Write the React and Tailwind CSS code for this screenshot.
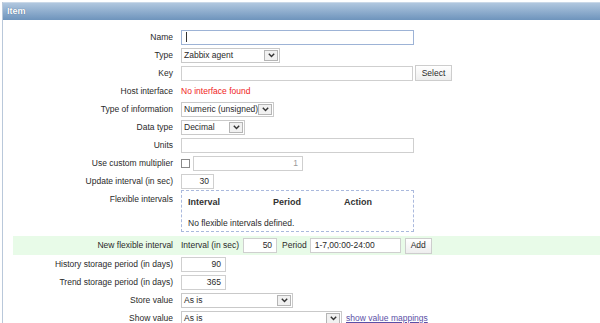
import React from "react";

function Chevron() {
  return (
    <svg width="7" height="5" viewBox="0 0 7 5" className="block">
      <path d="M0.8 0.8 L3.5 3.6 L6.2 0.8" fill="none" stroke="#333" strokeWidth="1.4" />
    </svg>
  );
}

function Select({ w, text }) {
  return (
    <div className={`flex items-center h-[15px] border border-[#c9c9c9] bg-white pl-[2px] pr-[1px] ${w}`}>
      <span className="flex-1 whitespace-nowrap">{text}</span>
      <span className="flex items-center justify-center w-[14px] h-[11px] border border-[#b5b5b5] bg-[#f1f1f1] shrink-0">
        <Chevron />
      </span>
    </div>
  );
}

function Input({ w, value = "", right = false, blue = false, faded = false }) {
  return (
    <div
      className={`h-[15px] border bg-white flex items-center px-[4px] ${w} ${
        blue ? "border-[#9db3d6]" : "border-[#cfcfcf]"
      } ${right ? "justify-end" : ""} ${faded ? "text-[#9a9a9a]" : ""}`}
    >
      {blue ? <span className="w-px h-[10px] bg-[#333]" /> : value}
    </div>
  );
}

function Button({ w, text }) {
  return (
    <div
      className={`h-[16px] border border-[#cdcdcd] bg-gradient-to-b from-white to-[#eeeeee] flex items-center justify-center ${w}`}
    >
      {text}
    </div>
  );
}

function Row({ label, children, h = "h-[18px]", top = false }) {
  return (
    <div className={`flex ${h} ${top ? "items-start" : "items-center"}`}>
      <div className={`w-[160px] text-right whitespace-nowrap ${top ? "pt-[3px]" : ""}`}>{label}</div>
      <div className="ml-[8px] flex items-center">{children}</div>
    </div>
  );
}

export default function App() {
  return (
    <div className="w-[600px] h-[323px] overflow-hidden bg-white font-['Liberation_Sans',Arial,sans-serif] text-[8.5px] text-[#2a2a2a] pl-[2px]">
      <div className="h-full border-l border-[#b9c8da]">
        <div className="mt-[2px] h-[18px] bg-gradient-to-b from-[#b0c7df] to-[#6e94bc] border-t border-[#c9d8e8] flex items-center pl-[4px]">
          <span className="text-white font-bold text-[9px] [text-shadow:0_0_1px_#3d5f85]">Item</span>
        </div>
        <div className="pl-[10px] pt-[8px]">
          <Row label="Name">
            <Input w="w-[233px]" blue />
          </Row>
          <Row label="Type">
            <Select w="w-[99px]" text="Zabbix agent" />
          </Row>
          <Row label="Key">
            <Input w="w-[232px]" />
            <div className="ml-[2px]">
              <Button w="w-[37px]" text="Select" />
            </div>
          </Row>
          <Row label="Host interface">
            <span className="text-[#f01d1d]">No interface found</span>
          </Row>
          <Row label="Type of information">
            <Select w="w-[93px]" text="Numeric (unsigned)" />
          </Row>
          <Row label="Data type">
            <Select w="w-[64px]" text="Decimal" />
          </Row>
          <Row label="Units">
            <Input w="w-[233px]" />
          </Row>
          <Row label="Use custom multiplier">
            <div className="w-[9px] h-[9px] border border-[#8a8a8a] bg-white" />
            <div className="ml-[3px]">
              <Input w="w-[110px]" value="1" right faded />
            </div>
          </Row>
          <Row label="Update interval (in sec)">
            <Input w="w-[33px]" value="30" right />
          </Row>
          <Row label="Flexible intervals" h="h-[46px]" top>
            <div className="w-[233px] h-[42px] border border-dashed border-[#aab9dd] px-[6px] pt-[5px]">
              <div className="flex font-bold text-[9px] text-[#333]">
                <span className="w-[85px]">Interval</span>
                <span className="w-[71px]">Period</span>
                <span>Action</span>
              </div>
              <div className="mt-[7px]">No flexible intervals defined.</div>
            </div>
          </Row>
          <div className="bg-[#e8fbe8]">
            <Row label="New flexible interval" h="h-[19px]">
              <span>Interval (in sec)</span>
              <div className="ml-[4px]">
                <Input w="w-[34px]" value="50" right />
              </div>
              <span className="ml-[5px]">Period</span>
              <div className="ml-[3px]">
                <Input w="w-[91px]" value="1-7,00:00-24:00" />
              </div>
              <div className="ml-[4px]">
                <Button w="w-[27px]" text="Add" />
              </div>
            </Row>
          </div>
          <Row label="History storage period (in days)">
            <Input w="w-[45px]" value="90" right />
          </Row>
          <Row label="Trend storage period (in days)">
            <Input w="w-[45px]" value="365" right />
          </Row>
          <Row label="Store value">
            <Select w="w-[112px]" text="As is" />
          </Row>
          <Row label="Show value">
            <Select w="w-[161px]" text="As is" />
            <span className="ml-[4px] text-[#5b4fa6] underline">show value mappings</span>
          </Row>
        </div>
      </div>
    </div>
  );
}
